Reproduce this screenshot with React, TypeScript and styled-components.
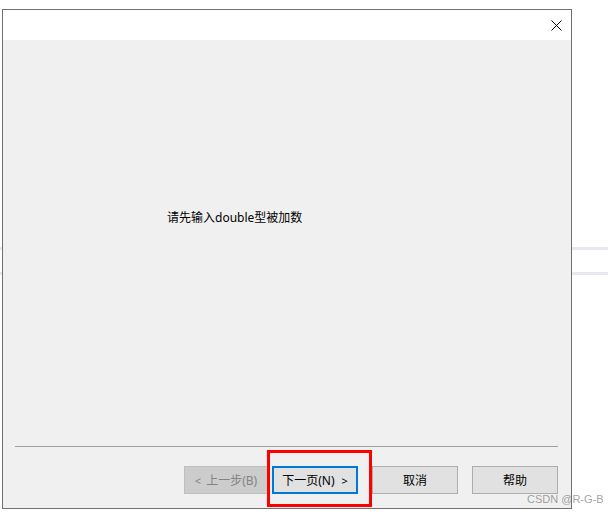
import React from 'react';
import styled, { createGlobalStyle } from 'styled-components';

const GlobalStyle = createGlobalStyle`
  html, body {
    margin: 0;
    padding: 0;
    background: #ffffff;
  }
  body {
    font-family: 'Noto Sans', 'Noto Sans CJK SC', sans-serif;
  }
`;

/**
 * Page behind the dialog (faint lines of the page underneath)
 */

const Page = styled.div`
  position: relative;
  width: 608px;
  height: 514px;
  overflow: hidden;
  padding: 9px 0 0 2px;
  box-sizing: border-box;
  background:
    linear-gradient(#e8e8f2, #e8e8f2) 0 247px / 100% 3px no-repeat,
    linear-gradient(#e8e8f2, #e8e8f2) 0 272px / 100% 3px no-repeat,
    #ffffff;
`;

/**
 * Dialog window
 */

const Dialog = styled.div`
  width: 570px;
  height: 500px;
  box-sizing: border-box;
  border: 1px solid #707070;
  display: flex;
  flex-direction: column;
  background: #f0f0f0;
`;

const TitleBar = styled.div`
  height: 30px;
  background: #ffffff;
  display: flex;
  align-items: center;
  justify-content: flex-end;
  padding-right: 9px;
`;

const CloseButton = styled.div`
  width: 11px;
  height: 11px;
  display: flex;
`;

const Body = styled.div`
  flex: 1;
  display: flex;
  flex-direction: column;
`;

const Content = styled.div`
  height: 406px;
  padding: 170px 0 0 164px;
  box-sizing: border-box;
`;

const Prompt = styled.div`
  font-size: 12px;
  line-height: 16px;
  color: #000000;
`;

const Separator = styled.div`
  height: 1px;
  margin: 0 13px 0 12px;
  background: #a0a0a0;
`;

const Footer = styled.div`
  display: flex;
  justify-content: flex-end;
  padding: 19px 13px 13px 0;
`;

const Button = styled.div<{ $disabled?: boolean; $focused?: boolean; $gap?: number; $width?: number }>`
  width: ${({ $width }) => $width ?? 86}px;
  height: 28px;
  box-sizing: border-box;
  margin-left: ${({ $gap }) => $gap ?? 14}px;
  display: flex;
  align-items: center;
  justify-content: center;
  font-size: 12px;
  color: ${({ $disabled }) => ($disabled ? '#838383' : '#000000')};
  background: ${({ $disabled }) => ($disabled ? '#cccccc' : '#e1e1e1')};
  border: ${({ $disabled, $focused }) =>
    $focused ? '2px solid #0078d7' : $disabled ? '1px solid #bfbfbf' : '1px solid #adadad'};
`;

const Arrow = styled.span<{ $before?: boolean }>`
  font-size: 11px;
  margin: ${({ $before }) => ($before ? '0 5px 0 0' : '0 0 0 7px')};
`;

/**
 * Annotations on top of the screenshot
 */

const Highlight = styled.div`
  position: absolute;
  left: 267px;
  top: 450px;
  width: 105px;
  height: 57px;
  box-sizing: border-box;
  border: 3px solid #ff0000;
`;

const Watermark = styled.div`
  position: absolute;
  left: 527px;
  top: 492px;
  font-family: 'Liberation Sans', Arial, sans-serif;
  font-size: 11px;
  line-height: 14px;
  color: rgba(110, 110, 110, 0.65);
  white-space: nowrap;
`;

const App: React.FC = () => {
  return (
    <React.Fragment>
      <GlobalStyle />
      <Page>
        <Dialog>
          <TitleBar>
            <CloseButton>
              <svg width="11" height="11" viewBox="0 0 11 11">
                <path d="M0.5 0.5 L10.5 10.5 M10.5 0.5 L0.5 10.5" stroke="#000" strokeWidth="1" fill="none" />
              </svg>
            </CloseButton>
          </TitleBar>
          <Body>
            <Content>
              <Prompt>请先输入double型被加数</Prompt>
            </Content>
            <Separator />
            <Footer>
              <Button $disabled $gap={0} $width={84}>
                <Arrow $before>&lt;</Arrow>上一步(B)
              </Button>
              <Button $focused $gap={4}>
                下一页(N)<Arrow>&gt;</Arrow>
              </Button>
              <Button>取消</Button>
              <Button>帮助</Button>
            </Footer>
          </Body>
        </Dialog>
        <Highlight />
        <Watermark>CSDN @R-G-B</Watermark>
      </Page>
    </React.Fragment>
  );
};

export default App;
